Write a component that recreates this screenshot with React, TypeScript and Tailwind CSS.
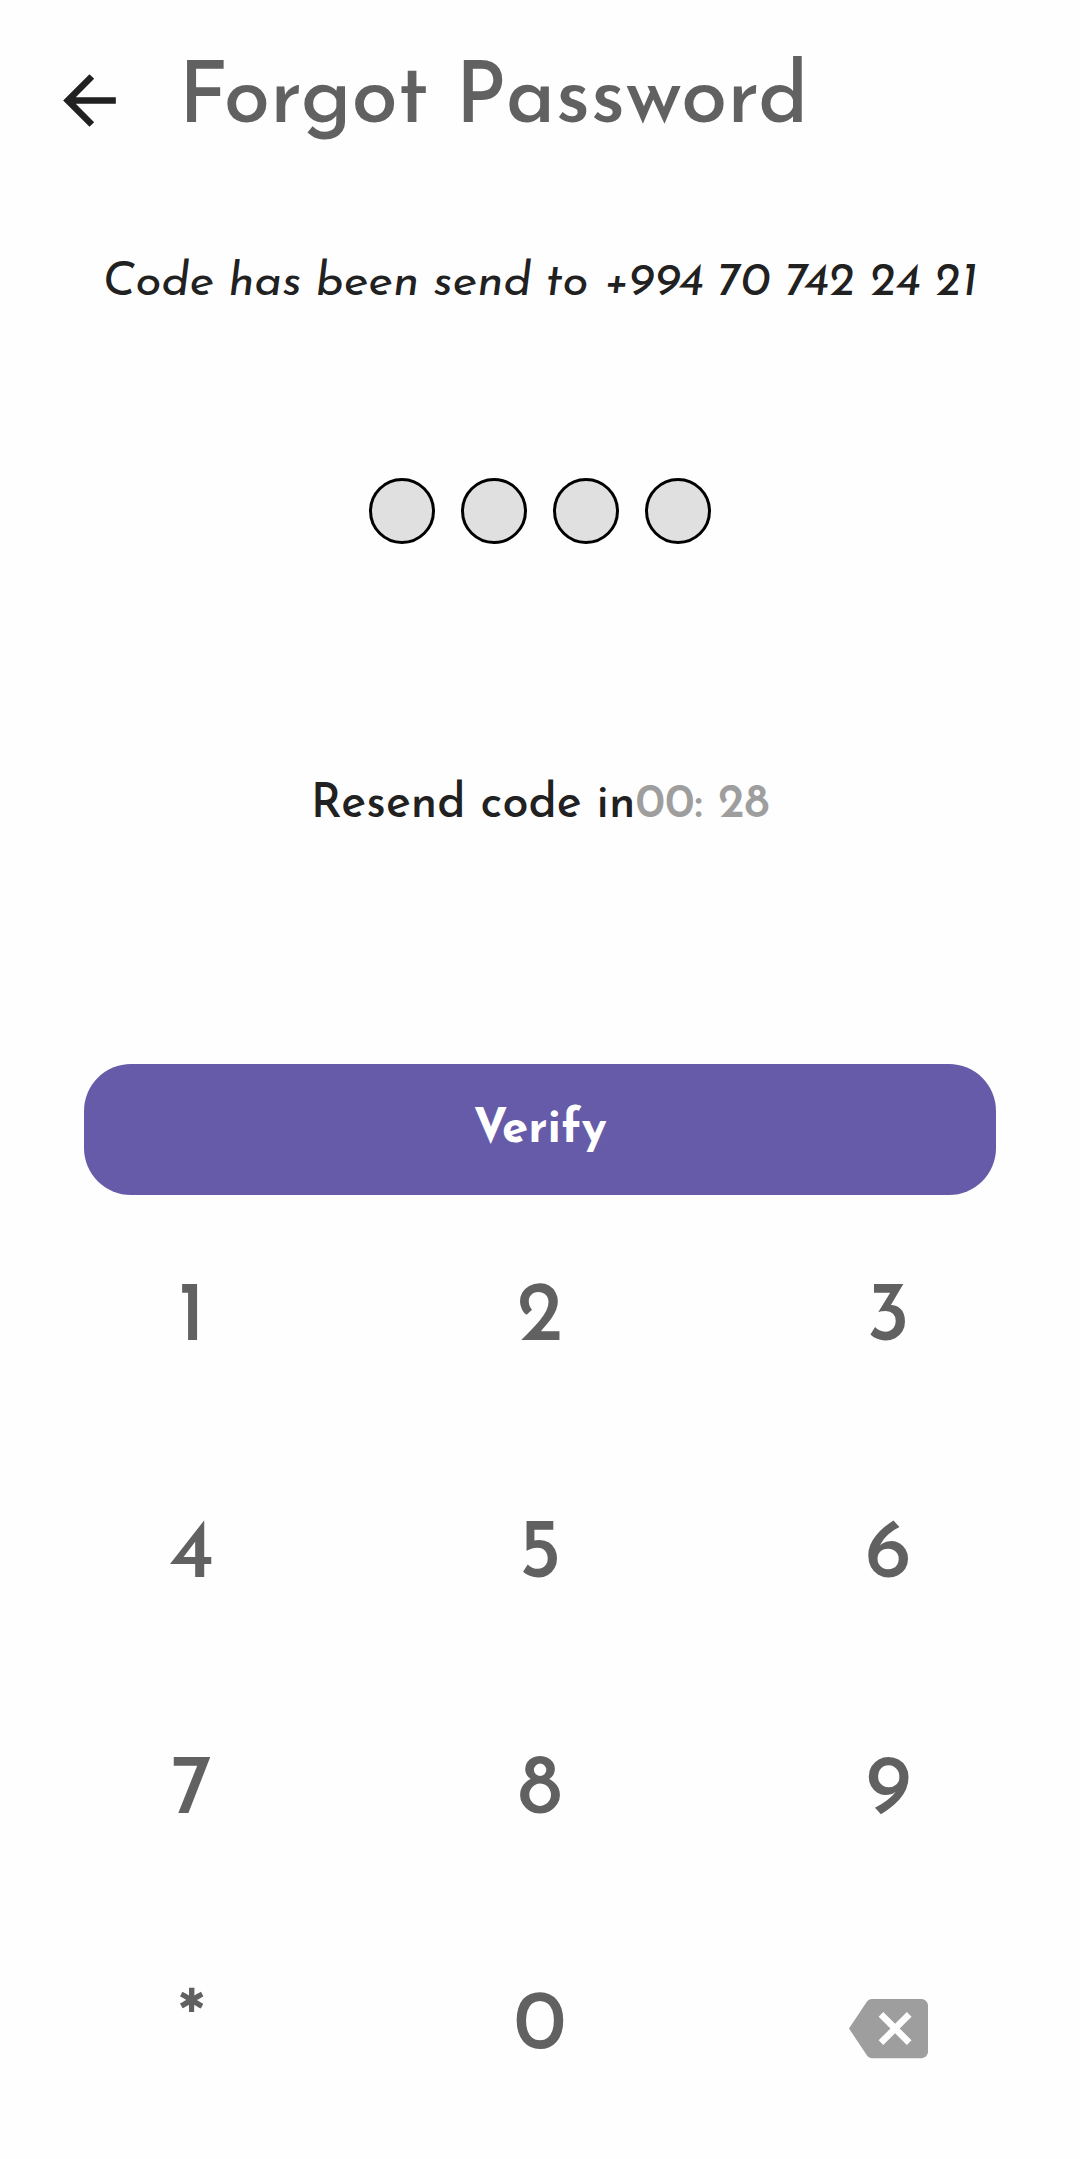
import React from "react";
import { MdArrowBack, MdBackspace } from "react-icons/md";

const DIGITS = ["1", "2", "3", "4", "5", "6", "7", "8", "9", "*", "0"];

function Header() {
  return (
    <header className="mt-[59px] flex h-[84px] items-center pl-[50px]">
      <button aria-label="Back" className="pb-[2px] text-[#212121]">
        <MdArrowBack size={79} />
      </button>
      <h1 className="ml-[49.5px] text-[84px] leading-none font-medium whitespace-nowrap text-[#616161]">
        Forgot Password
      </h1>
    </header>
  );
}

function PinDots() {
  return (
    <div className="mt-[171.5px] flex justify-center gap-[26px]">
      {[0, 1, 2, 3].map((i) => (
        <span
          key={i}
          className="size-[66px] rounded-full border-[3px] border-black bg-[#e0e0e0]"
        />
      ))}
    </div>
  );
}

function Keypad() {
  return (
    <div className="mx-[17.5px] mt-[82.4px] grid grid-cols-3 gap-y-[152.25px] text-[84px] leading-none font-medium text-[#616161]">
      {DIGITS.map((d) => (
        <button key={d} className="h-[84px] text-center">
          {d}
        </button>
      ))}
      <button
        aria-label="Delete"
        className="flex h-[84px] items-center justify-center pt-[1px] text-[#9e9e9e]"
      >
        <MdBackspace size={79} />
      </button>
    </div>
  );
}

export default function App() {
  return (
    <main className="flex h-[2159px] w-[1080px] flex-col overflow-hidden bg-[#fefefe] font-['Josefin_Sans',Lato,sans-serif]">
      <Header />
      <p className="mt-[116.5px] h-[47px] text-center text-[47.25px] leading-[47px] italic whitespace-nowrap text-[#212121]">
        Code has been send to +994 70 742 24 21
      </p>
      <PinDots />
      <p className="mt-[238px] h-[47px] text-center text-[47.25px] leading-[47px] font-medium whitespace-nowrap text-[#212121]">
        Resend code in<span className="font-semibold text-[#9e9e9e]">00: 28</span>
      </p>
      <button className="mx-[84px] mt-[234.5px] h-[131.5px] rounded-[47px] bg-[#655ba8] pt-[3px] text-[47.25px] leading-none font-bold text-white">
        Verify
      </button>
      <Keypad />
    </main>
  );
}
